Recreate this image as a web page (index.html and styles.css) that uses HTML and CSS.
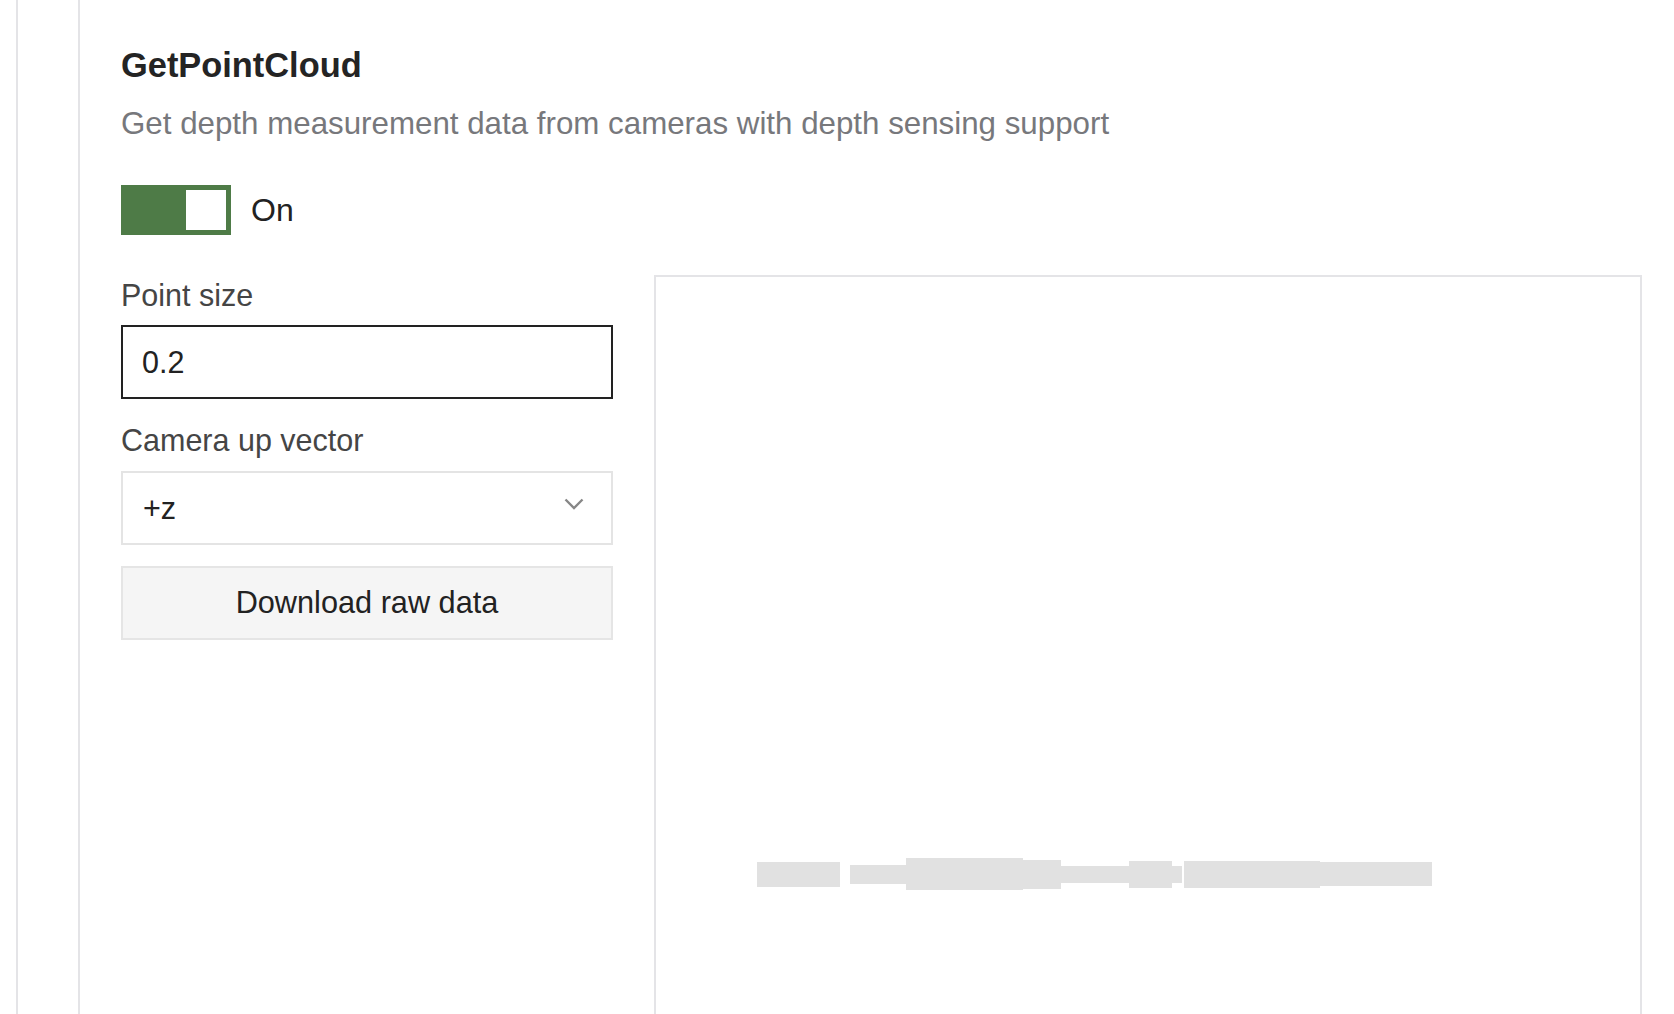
FILE: index.html
```html
<!DOCTYPE html>
<html lang="en">
<head>
<meta charset="utf-8">
<title>GetPointCloud</title>
<link rel="stylesheet" href="styles.css">
</head>
<body>
<div class="page">
  <div class="rail">
    <div class="rail-inner">
      <main class="content">
        <h1 class="title">GetPointCloud</h1>
        <p class="desc">Get depth measurement data from cameras with depth sensing support</p>
        <div class="toggle-row">
          <button class="toggle" type="button" aria-pressed="true"><span class="knob"></span></button>
          <span class="toggle-label">On</span>
        </div>
        <div class="body-row">
          <div class="form">
            <label class="label label-first">Point size</label>
            <div class="input">0.2</div>
            <label class="label label-second">Camera up vector</label>
            <div class="select">
              <span>+z</span>
              <svg class="chevron" width="20" height="12" viewBox="0 0 20 12"><polyline points="1.5,1.5 10,10 18.5,1.5" fill="none" stroke="#878787" stroke-width="2.4"/></svg>
            </div>
            <button class="btn" type="button">Download raw data</button>
          </div>
          <div class="canvas">
            <div class="blur-row">
              <span class="blk b1"></span>
              <span class="blk b2"></span>
              <span class="blk b3"></span>
              <span class="blk b4"></span>
              <span class="blk b5"></span>
              <span class="blk b6"></span>
              <span class="blk b7"></span>
              <span class="blk b8"></span>
              <span class="blk b9"></span>
            </div>
          </div>
        </div>
      </main>
    </div>
  </div>
</div>
</body>
</html>
```

FILE: styles.css
```css
* { box-sizing: border-box; }

html, body {
  margin: 0;
  height: 100%;
  background: #ffffff;
  overflow: hidden;
}

body {
  font-family: "Liberation Sans", Arial, sans-serif;
  color: #222222;
}

.page {
  height: 100vh;
  padding-left: 16px;
}

.rail {
  height: 100%;
  border-left: 2px solid #e4e4e7;
  padding-left: 60px;
}

.rail-inner {
  height: 100%;
  border-left: 2px solid #e4e4e7;
  padding-left: 41px;
  padding-right: 32px;
}

.content {
  padding-top: 45px;
}

.title {
  margin: 0;
  font-size: 34.4px;
  line-height: 40px;
  font-weight: 700;
  color: #242424;
}

.desc {
  margin: 21px 0 0;
  font-size: 31.3px;
  line-height: 36px;
  color: #77787c;
}

.toggle-row {
  margin-top: 43px;
  height: 50px;
  display: flex;
  align-items: center;
  gap: 20px;
}

.toggle {
  width: 110px;
  height: 50px;
  padding: 5px;
  border: none;
  background: #4e7b47;
  display: flex;
  justify-content: flex-end;
  align-items: center;
}

.knob {
  width: 40px;
  height: 40px;
  background: #ffffff;
}

.toggle-label {
  font-size: 32px;
  line-height: 50px;
  color: #222222;
}

.body-row {
  margin-top: 40px;
  display: flex;
  gap: 41px;
  align-items: flex-start;
}

.form {
  width: 492px;
  flex: none;
  display: flex;
  flex-direction: column;
}

.label {
  display: block;
  font-size: 30.5px;
  line-height: 36px;
  color: #454545;
}

.label-first { margin-top: 2px; }
.label-second { margin-top: 23px; }

.input {
  margin-top: 12px;
  height: 74px;
  border: 2px solid #222222;
  padding: 0 19px;
  display: flex;
  align-items: center;
  font-size: 30.5px;
  color: #222222;
}

.select {
  margin-top: 13px;
  height: 74px;
  border: 2px solid #e4e4e4;
  padding: 0 27px 0 20px;
  display: flex;
  align-items: center;
  justify-content: space-between;
  font-size: 30.5px;
  color: #222222;
}

.chevron {
  margin-bottom: 8px;
}

.btn {
  margin-top: 21px;
  height: 74px;
  width: 100%;
  background: #f5f5f5;
  border: 2px solid #e5e5e5;
  font-family: "Liberation Sans", Arial, sans-serif;
  font-size: 30.7px;
  color: #222222;
}

.canvas {
  flex: 1;
  height: 900px;
  border: 2px solid #e4e4e7;
  padding: 581px 0 0 101px;
}

.blur-row {
  display: flex;
  align-items: center;
  height: 32px;
}

.blk {
  display: block;
  background: #e1e1e1;
}

.b1 { width: 83px; height: 25px; margin-right: 10px; }
.b2 { width: 56px; height: 19px; }
.b3 { width: 117px; height: 32px; }
.b4 { width: 38px; height: 29px; }
.b5 { width: 68px; height: 17px; }
.b6 { width: 43px; height: 27px; }
.b7 { width: 10px; height: 17px; margin-right: 2px; }
.b8 { width: 136px; height: 27px; }
.b9 { width: 112px; height: 24px; }
```
